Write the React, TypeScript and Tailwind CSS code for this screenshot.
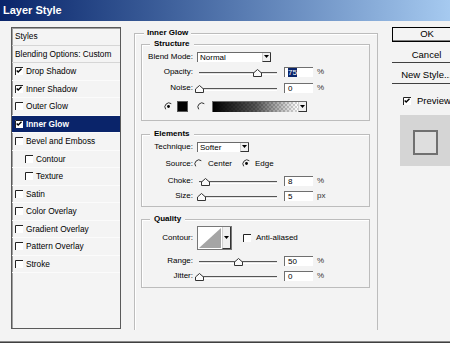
import React from "react";

const FONT = "[font-family:'Liberation_Sans',Arial,sans-serif]";

function CheckBox({ on }: { on?: boolean }) {
  return (
    <svg width="8" height="8" viewBox="0 0 8 8" className="shrink-0">
      <rect x="0" y="0" width="8" height="8" fill="#fff" />
      <path d="M0.5 8V0.5H8" fill="none" stroke="#222" strokeWidth="1" />
      {on && <path d="M1.7 3.5L3.2 5.1L6.5 1.8" fill="none" stroke="#000" strokeWidth="1.4" />}
    </svg>
  );
}

function Radio({ on }: { on?: boolean }) {
  return (
    <svg width="9" height="9" viewBox="0 0 9 9" className="shrink-0">
      <path d="M1.7 7.3A4 4 0 0 1 7.3 1.7" fill="none" stroke="#333" strokeWidth="1" />
      {on && <circle cx="4.5" cy="4.5" r="1.4" fill="#000" />}
    </svg>
  );
}

function DropBtn() {
  return (
    <div className="w-[9px] h-full shrink-0 bg-[#f0f0f0] border-l border-[#cfcfcf] border-r border-b border-r-[#333] border-b-[#333] flex items-center justify-center">
      <svg width="5" height="3" viewBox="0 0 5 3">
        <path d="M0 0H5L2.5 3Z" fill="#000" />
      </svg>
    </div>
  );
}

function Slider({ value }: { value: number }) {
  return (
    <div className="relative w-[78px] h-[11px] shrink-0 flex items-end">
      <div className="w-full h-[3px] mb-[2px] bg-[#e4e4e4] border-t border-[#555] border-b border-b-white" />
      <svg
        className="absolute bottom-0"
        style={{ left: value * 0.78 - 4.5 }}
        width="9"
        height="8"
        viewBox="0 0 9 8"
      >
        <path d="M4.5 0.5L8.5 4V7.5H0.5V4Z" fill="#fafafa" stroke="#333" strokeWidth="1" />
      </svg>
    </div>
  );
}

function NumBox({ v, sel }: { v: string; sel?: boolean }) {
  return (
    <div className="w-[29px] h-[10px] shrink-0 bg-white border-t border-l border-[#6f6f6f] pl-[3px] text-[8px] leading-[9px]">
      {sel ? <span className="bg-[#0a246a] text-white">{v}</span> : v}
    </div>
  );
}

function Label({ children }: { children: React.ReactNode }) {
  return <div className="w-[51px] shrink-0 text-right">{children}</div>;
}

function SliderRow({ label, value, v, unit, sel, mt }: { label: string; value: number; v: string; unit: string; sel?: boolean; mt: string }) {
  return (
    <div className={`flex items-center h-[11px] ${mt}`}>
      <Label>{label}</Label>
      <div className="ml-[6px]">
        <Slider value={value} />
      </div>
      <div className="ml-[7px]">
        <NumBox v={v} sel={sel} />
      </div>
      <span className="ml-[4px] text-[#333]">{unit}</span>
    </div>
  );
}

function Legend({ children }: { children: React.ReactNode }) {
  return (
    <legend className="ml-[8px] px-[4px] bg-[#f3f3f3] font-bold text-[8px] leading-[10px]">{children}</legend>
  );
}

const rows = [
  { t: "Styles", head: true },
  { t: "Blending Options: Custom", head: true },
  { t: "Drop Shadow", on: true },
  { t: "Inner Shadow", on: true },
  { t: "Outer Glow" },
  { t: "Inner Glow", on: true, sel: true },
  { t: "Bevel and Emboss" },
  { t: "Contour", indent: true },
  { t: "Texture", indent: true },
  { t: "Satin" },
  { t: "Color Overlay" },
  { t: "Gradient Overlay" },
  { t: "Pattern Overlay" },
  { t: "Stroke" },
];

export default function App() {
  return (
    <div className={`w-[450px] h-[343px] overflow-hidden bg-[#f3f3f3] flex flex-col text-black ${FONT}`}>
      {/* title bar */}
      <div className="h-[21px] shrink-0 bg-linear-to-r from-[#0a246a] to-[#a6caf0] flex items-center pl-[3px] text-white font-bold text-[11px]">
        Layer Style
      </div>

      <div className="h-[320px] shrink-0 flex overflow-hidden">
        {/* styles list */}
        <div className="ml-[11px] mt-[6px] w-[110px] h-[302px] shrink-0 border border-[#5a5a5a] shadow-[inset_1px_1px_0_#a0a0a0] bg-[#f4f4f4] text-[8.3px]">
          {rows.map((r) => (
            <div
              key={r.t}
              className={`h-[17.5px] flex items-center gap-[3px] border-b ${
                r.head ? "border-[#d6d6d6]" : "border-[#fbfbfb]"
              } ${r.sel ? "bg-[#0a246a] text-white font-bold" : ""} ${r.indent ? "pl-[13px]" : "pl-[3px]"}`}
            >
              {!r.head && <CheckBox on={r.on} />}
              <span>{r.t}</span>
            </div>
          ))}
        </div>

        {/* inner glow panel */}
        <fieldset className="ml-[13px] mt-[7px] w-[244px] h-[302px] shrink-0 border-t border-x border-[#bcbcbc] shadow-[inset_1px_1px_0_#fff] pl-[6px] pr-[7px] text-[8px] leading-[10px]">
          <legend className="ml-[3px] px-[3px] bg-[#f3f3f3] font-bold text-[8px] leading-[10px]">Inner Glow</legend>

          {/* structure */}
          <fieldset className="mt-[1px] border border-[#bcbcbc] shadow-[inset_1px_1px_0_#fff] pb-[8px]">
            <Legend>Structure</Legend>
            <div className="flex items-center h-[11px] mt-[2px]">
              <Label>Blend Mode:</Label>
              <div className="ml-[4px] w-[74px] h-[10px] flex bg-white border-t border-l border-[#6b6b6b]">
                <span className="flex-1 pl-[2px] leading-[9px]">Normal</span>
                <DropBtn />
              </div>
            </div>
            <SliderRow label="Opacity:" value={75} v="75" unit="%" sel mt="mt-[4px]" />
            <SliderRow label="Noise:" value={0} v="0" unit="%" mt="mt-[5px]" />
            <div className="flex items-center h-[11px] mt-[8px] pl-[22px]">
              <Radio on />
              <div className="ml-[4px] w-[11px] h-[11px] bg-black border border-[#555]" />
              <div className="ml-[9px]">
                <Radio />
              </div>
              <div className="ml-[6px] w-[95px] h-[11px] flex border-t border-l border-[#6b6b6b] bg-white">
                <div className="flex-1 [background-image:conic-gradient(#d4d4d4_25%,#fff_0_50%,#d4d4d4_0_75%,#fff_0)] [background-size:4px_4px]">
                  <div className="w-full h-full bg-linear-to-r from-black via-[#000000aa] to-transparent" />
                </div>
                <DropBtn />
              </div>
            </div>
          </fieldset>

          {/* elements */}
          <fieldset className="mt-[8px] border border-[#bcbcbc] shadow-[inset_1px_1px_0_#fff] pb-[5px]">
            <Legend>Elements</Legend>
            <div className="flex items-center h-[11px] mt-[2px]">
              <Label>Technique:</Label>
              <div className="ml-[4px] w-[52px] h-[10px] flex bg-white border-t border-l border-[#6b6b6b]">
                <span className="flex-1 pl-[2px] leading-[9px]">Softer</span>
                <DropBtn />
              </div>
            </div>
            <div className="flex items-center h-[11px] mt-[6px]">
              <Label>Source:</Label>
              <div className="ml-[1px]">
                <Radio />
              </div>
              <span className="ml-[5px]">Center</span>
              <div className="ml-[10px]">
                <Radio on />
              </div>
              <span className="ml-[4px]">Edge</span>
            </div>
            <SliderRow label="Choke:" value={8} v="8" unit="%" mt="mt-[6px]" />
            <SliderRow label="Size:" value={3} v="5" unit="px" mt="mt-[4px]" />
          </fieldset>

          {/* quality */}
          <fieldset className="mt-[7px] border border-[#bcbcbc] shadow-[inset_1px_1px_0_#fff] pb-[6px]">
            <Legend>Quality</Legend>
            <div className="flex items-center h-[24px] mt-[2px]">
              <Label>Contour:</Label>
              <div className="ml-[4px] h-[24px] flex border border-[#777] bg-white">
                <svg width="24" height="22" viewBox="0 0 24 22">
                  <path d="M1 21L23 1V21Z" fill="#a5a5a5" />
                </svg>
                <DropBtn />
              </div>
              <div className="ml-[11px]">
                <CheckBox />
              </div>
              <span className="ml-[5px]">Anti-aliased</span>
            </div>
            <SliderRow label="Range:" value={50} v="50" unit="%" mt="mt-[5px]" />
            <SliderRow label="Jitter:" value={0} v="0" unit="%" mt="mt-[4px]" />
          </fieldset>
        </fieldset>

        {/* buttons */}
        <div className="ml-[14px] mt-[6px] w-[70px] shrink-0 flex flex-col text-[9.5px]">
          <div className="h-[15px] border border-black flex items-center justify-center shadow-[inset_-1px_-1px_0_#808080]">
            OK
          </div>
          <div className="mt-[6px] h-[15px] border-b border-r border-[#404040] flex items-center justify-center">
            Cancel
          </div>
          <div className="mt-[5px] h-[16px] border-b border-r border-[#404040] flex items-center justify-center">
            New Style...
          </div>
          <div className="mt-[10px] ml-[11px] flex items-center gap-[6px]">
            <CheckBox on />
            <span>Preview</span>
          </div>
          <div className="mt-[7px] ml-[8px] w-[62px] h-[51px] bg-[#d5d5d5] pl-[13px] pt-[15px]">
            <div className="w-[25px] h-[25px] border-2 border-[#707070] bg-[#dedede]" />
          </div>
        </div>
      </div>

      <div className="h-[2px] shrink-0 border-t border-[#8a8a8a] bg-[#404040]" />
    </div>
  );
}
